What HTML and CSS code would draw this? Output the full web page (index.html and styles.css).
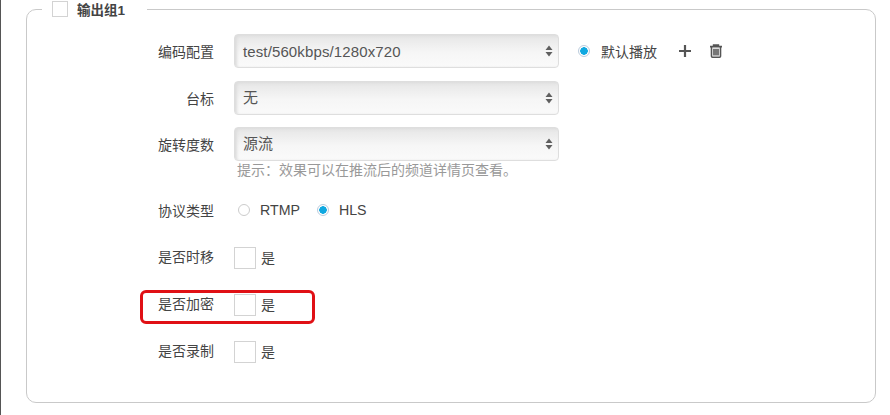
FILE: index.html
```html
<!DOCTYPE html>
<html lang="zh">
<head>
<meta charset="utf-8">
<title>输出组1</title>
<link rel="stylesheet" href="styles.css">
</head>
<body>
<div class="page">
  <fieldset class="group">
    <legend class="legend"><span class="box box-legend"></span><span class="legend-text">输出组1</span></legend>
    <div class="form">
      <div class="row row-select">
        <span class="label">编码配置</span>
        <div class="select"><span>test/560kbps/1280x720</span><svg class="arrows" width="8" height="12" viewBox="0 0 8 12"><path d="M4 0.5 7.500 5H.5zM.5 7h7L4 11.500z"/></svg></div>
        <span class="radio on default-radio"></span><span class="default-text">默认播放</span>
        <svg class="plus" width="14" height="14" viewBox="0 0 14 14"><path d="M7 1v12M1 7h12"/></svg>
        <svg class="trash" width="14" height="14" viewBox="0 0 14 14"><path d="M1 2.600h12M4.600 2.400V1h4.800v1.400M2.500 3v9.200q0 1 1 1h7q1 0 1-1V3M5 4.800v6.700M7 4.800v6.700M9 4.800v6.700"/></svg>
      </div>
      <div class="row row-select">
        <span class="label">台标</span>
        <div class="select"><span class="select-cn">无</span><svg class="arrows" width="8" height="12" viewBox="0 0 8 12"><path d="M4 0.5 7.500 5H.5zM.5 7h7L4 11.500z"/></svg></div>
      </div>
      <div class="row row-select">
        <span class="label">旋转度数</span>
        <div class="select"><span class="select-cn">源流</span><svg class="arrows" width="8" height="12" viewBox="0 0 8 12"><path d="M4 0.5 7.500 5H.5zM.5 7h7L4 11.500z"/></svg></div>
      </div>
      <p class="hint">提示：效果可以在推流后的频道详情页查看。</p>
      <div class="row row-protocol">
        <span class="label">协议类型</span>
        <span class="radio"></span><span class="opt">RTMP</span>
        <span class="radio on"></span><span class="opt">HLS</span>
      </div>
      <div class="row row-check">
        <span class="label">是否时移</span><span class="box"></span><span class="opt-cn">是</span>
      </div>
      <div class="row row-check">
        <span class="label">是否加密</span><span class="box"></span><span class="opt-cn">是</span>
        <div class="highlight"></div>
      </div>
      <div class="row row-check">
        <span class="label">是否录制</span><span class="box"></span><span class="opt-cn">是</span>
      </div>
    </div>
  </fieldset>
</div>
</body>
</html>
```
FILE: styles.css
```css
* { box-sizing: border-box; }
html, body { margin: 0; height: 100%; background: #fff; }
body {
  width: 890px;
  height: 415px;
  overflow: hidden;
  color: #444;
  font-family: "Liberation Sans", "Noto Sans CJK SC", sans-serif;
  font-size: 14px;
}
.page {
  height: 415px;
  padding: 0 14px 12px 25px;
  border-left: 1px solid #555;
}
.group {
  margin: 0;
  padding: 0;
  height: 403px;
  border: 1px solid #c9c9c9;
  border-radius: 10px;
  min-width: 0;
}
.legend {
  margin-left: 15px;
  padding: 0 22px 0 10px;
  height: 18px;
  display: flex;
  align-items: center;
}
.legend-text { margin-left: 9px; font-weight: 700; font-size: 13.500px; color: #444; }
.box {
  display: block;
  flex: none;
  width: 22px;
  height: 22px;
  border: 1px solid #d3d3d3;
  background: #fff;
}
.box-legend { width: 16px; height: 16px; }
.form { margin-top: 16px; padding-left: 131px; }
.row { position: relative; display: flex; align-items: center; }
.label { width: 56px; flex: none; text-align: right; color: #444; }
.row-select { height: 34px; margin-bottom: 13px; }
.row-select:nth-child(2) { margin-bottom: 12px; }
.row-select:nth-child(3) { margin-bottom: 0; }
.select {
  width: 325px;
  height: 34px;
  margin-left: 20px;
  padding: 0 5px 0 8px;
  display: flex;
  align-items: center;
  justify-content: space-between;
  border: 1px solid #dedede;
  border-radius: 4px;
  background: linear-gradient(#e6e6e6, #f6f6f6 55%, #fafafa);
  box-shadow: inset 2px 1px 3px #dcdcdc;
  color: #555;
  font-size: 15px;
  letter-spacing: .12px;
}
.select-cn { padding-bottom: 3px; }
.arrows { fill: #5f5f5f; }
.radio {
  width: 12px;
  height: 12px;
  flex: none;
  border: 1px solid #ccc;
  border-radius: 50%;
  background: #fff;
}
.radio.on { border-color: #bcd; background: radial-gradient(circle, #0fa8e0 0 3.500px, #fff 4px); }
.default-radio { margin-left: 19px; }
.default-text { margin-left: 11px; }
.plus { margin-left: 21px; stroke: #555; stroke-width: 2.200; fill: none; }
.trash { margin-left: 17px; stroke: #555; stroke-width: 1.600; fill: none; }
.hint { margin: 0 0 0 79px; height: 19px; line-height: 18px; color: #999; }
.row-protocol { height: 20px; margin-top: 20px; margin-bottom: 26px; }
.label + .radio { margin-left: 24px; }
.opt { margin-left: 10px; margin-right: 17px; font-size: 14.200px; }
.row-check { height: 24px; margin-top: 23px; }
.row-protocol + .row-check { margin-top: 0; }
.row-check .label { padding-bottom: 4px; }
.row-check .box { margin-left: 20px; }
.opt-cn { margin-left: 5px; padding-bottom: 2px; }
.highlight {
  position: absolute;
  left: -18px;
  top: -3px;
  width: 175px;
  height: 34px;
  border: 3px solid #e01015;
  border-radius: 6px;
}
```
